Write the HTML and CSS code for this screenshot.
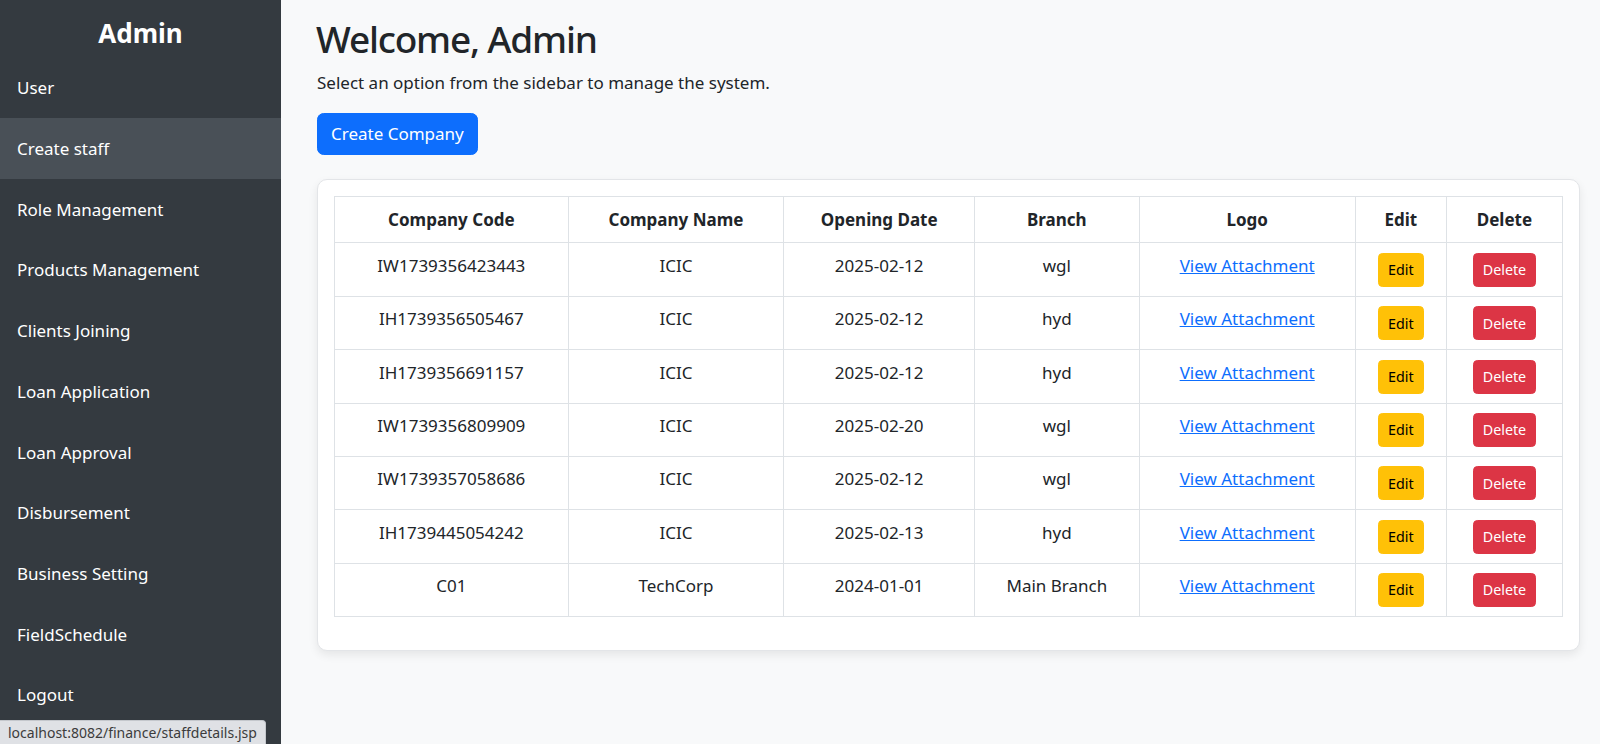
FILE: index.html
```html
<!DOCTYPE html>
<html lang="en">
<head>
<meta charset="utf-8">
<title>Admin Dashboard</title>
<link rel="stylesheet" href="styles.css">
</head>
<body>
<div class="layout">
  <nav class="sidebar">
    <h3 class="brand">Admin</h3>
    <a class="nav-link" href="#">User</a>
    <a class="nav-link active" href="#">Create staff</a>
    <a class="nav-link" href="#">Role Management</a>
    <a class="nav-link" href="#">Products Management</a>
    <a class="nav-link" href="#">Clients Joining</a>
    <a class="nav-link" href="#">Loan Application</a>
    <a class="nav-link" href="#">Loan Approval</a>
    <a class="nav-link" href="#">Disbursement</a>
    <a class="nav-link" href="#">Business Setting</a>
    <a class="nav-link" href="#">FieldSchedule</a>
    <a class="nav-link" href="#">Logout</a>
  </nav>
  <main class="main">
    <h1 class="title">Welcome, Admin</h1>
    <p class="lead-text">Select an option from the sidebar to manage the system.</p>
    <button class="btn btn-primary">Create Company</button>
    <div class="card">
      <table class="table">
        <colgroup>
          <col class="c-code"><col class="c-name"><col class="c-date"><col class="c-branch"><col class="c-logo"><col class="c-edit"><col class="c-del">
        </colgroup>
        <thead>
          <tr><th>Company Code</th><th>Company Name</th><th>Opening Date</th><th>Branch</th><th>Logo</th><th>Edit</th><th>Delete</th></tr>
        </thead>
        <tbody>
          <tr><td>IW1739356423443</td><td>ICIC</td><td>2025-02-12</td><td>wgl</td><td><a class="link" href="#">View Attachment</a></td><td><button class="btn btn-sm btn-warning">Edit</button></td><td><button class="btn btn-sm btn-danger">Delete</button></td></tr>
          <tr><td>IH1739356505467</td><td>ICIC</td><td>2025-02-12</td><td>hyd</td><td><a class="link" href="#">View Attachment</a></td><td><button class="btn btn-sm btn-warning">Edit</button></td><td><button class="btn btn-sm btn-danger">Delete</button></td></tr>
          <tr><td>IH1739356691157</td><td>ICIC</td><td>2025-02-12</td><td>hyd</td><td><a class="link" href="#">View Attachment</a></td><td><button class="btn btn-sm btn-warning">Edit</button></td><td><button class="btn btn-sm btn-danger">Delete</button></td></tr>
          <tr><td>IW1739356809909</td><td>ICIC</td><td>2025-02-20</td><td>wgl</td><td><a class="link" href="#">View Attachment</a></td><td><button class="btn btn-sm btn-warning">Edit</button></td><td><button class="btn btn-sm btn-danger">Delete</button></td></tr>
          <tr><td>IW1739357058686</td><td>ICIC</td><td>2025-02-12</td><td>wgl</td><td><a class="link" href="#">View Attachment</a></td><td><button class="btn btn-sm btn-warning">Edit</button></td><td><button class="btn btn-sm btn-danger">Delete</button></td></tr>
          <tr><td>IH1739445054242</td><td>ICIC</td><td>2025-02-13</td><td>hyd</td><td><a class="link" href="#">View Attachment</a></td><td><button class="btn btn-sm btn-warning">Edit</button></td><td><button class="btn btn-sm btn-danger">Delete</button></td></tr>
          <tr><td>C01</td><td>TechCorp</td><td>2024-01-01</td><td>Main Branch</td><td><a class="link" href="#">View Attachment</a></td><td><button class="btn btn-sm btn-warning">Edit</button></td><td><button class="btn btn-sm btn-danger">Delete</button></td></tr>
        </tbody>
      </table>
    </div>
  </main>
</div>
<div class="status-bubble">localhost:8082/finance/staffdetails.jsp</div>
</body>
</html>
```
FILE: styles.css
```css
* { box-sizing: border-box; }

html, body {
  margin: 0;
  height: 100%;
}

body {
  font-family: "Noto Sans", "Open Sans", sans-serif;
  font-size: 17px;
  line-height: 1.5;
  color: #212529;
  background: #f8f9fa;
  overflow: hidden;
}

.layout {
  display: flex;
  min-height: 100vh;
}

/* ---------- Sidebar ---------- */
.sidebar {
  width: 281px;
  flex: 0 0 281px;
  background: #343a40;
  color: #fff;
  display: flex;
  flex-direction: column;
}

.brand {
  margin: 0;
  height: 57.3px;
  padding-top: 14px;
  font-size: 26px;
  line-height: 38px;
  font-weight: 700;
  text-align: center;
  color: #fff;
}

.nav-link {
  display: flex;
  align-items: center;
  height: 60.7px;
  padding-left: 17px;
  padding-top: 1px;
  color: #fff;
  text-decoration: none;
  font-size: 17px;
}

.nav-link.active {
  background: #495057;
}

/* ---------- Main ---------- */
.main {
  flex: 1;
  padding: 16.75px 20px 0 36px;
  min-width: 0;
}

.title {
  margin: 0 0 8.85px;
  font-size: 37px;
  line-height: 1.2;
  font-weight: 500;
  letter-spacing: -1.2px;
  margin-left: -1px;
}

.lead-text {
  margin: 0 0 17.5px;
  font-size: 17px;
  line-height: 25.5px;
}

.btn {
  display: inline-block;
  font-family: inherit;
  border: 1px solid transparent;
  cursor: pointer;
  text-align: center;
  vertical-align: middle;
}

.btn-primary {
  font-size: 17px;
  line-height: 25.5px;
  padding: 7.25px 13px;
  border-radius: 6.6px;
  background: #0d6efd;
  border-color: #0d6efd;
  color: #fff;
}

.btn-sm {
  font-size: 14.3px;
  line-height: 21.45px;
  padding: 5.3px 9.2px;
  border-radius: 4.4px;
  vertical-align: top;
}

.btn-warning {
  background: #ffc107;
  border-color: #ffc107;
  color: #000;
}

.btn-danger {
  background: #dc3545;
  border-color: #dc3545;
  color: #fff;
}

/* ---------- Card & table ---------- */
.card {
  margin-top: 24px;
  background: #fff;
  border: 1px solid #e3e5e8;
  border-radius: 10px;
  padding: 16px;
  box-shadow: 0 4px 10px rgba(0, 0, 0, 0.08);
}

.table {
  width: 100%;
  border-collapse: collapse;
  table-layout: fixed;
  margin-bottom: 17px;
  color: #212529;
}

.c-code { width: 233.6px; }
.c-name { width: 215.4px; }
.c-date { width: 190.8px; }
.c-branch { width: 164.3px; }
.c-logo { width: 216.2px; }
.c-edit { width: 91px; }
.c-del { width: 116px; }

.table th,
.table td {
  border: 1px solid #dee2e6;
  text-align: center;
  font-size: 17px;
  line-height: 25.5px;
}

.table th {
  font-weight: 700;
  vertical-align: middle;
  padding: 10px 8.8px;
}

.table td {
  vertical-align: top;
  padding: 9.5px 8.8px 8.8px;
}

.link {
  color: #0d6efd;
  text-decoration: underline;
}

/* ---------- Browser status bubble (overlay) ---------- */
.status-bubble {
  position: fixed;
  left: 0;
  bottom: 0;
  height: 24px;
  padding: 0 8px;
  font-size: 14px;
  line-height: 23px;
  color: #3c3c3c;
  background: #dfe1e5;
  border-top: 1px solid #c4c7cc;
  border-right: 1px solid #c4c7cc;
  border-top-right-radius: 4px;
  white-space: nowrap;
}
```
